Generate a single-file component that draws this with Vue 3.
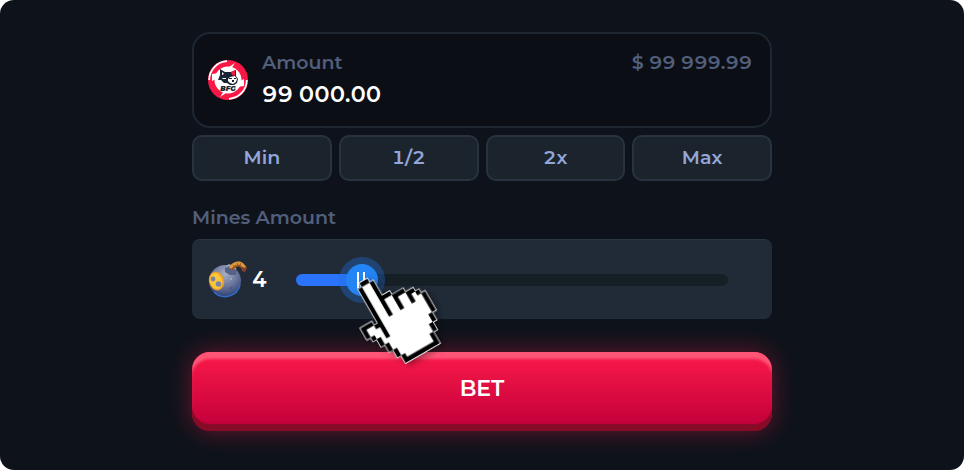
<template>
  <main class="page">
    <form class="bet-form" @submit.prevent>
      <div class="amount-card">
        <svg class="logo" viewBox="0 0 40 40" aria-hidden="true">
          <circle cx="20" cy="20" r="20" fill="#fb1745" />
          <path d="M1.2 20A18.8 18.8 0 0 1 19 1.2M38.8 20A18.8 18.8 0 0 1 21 38.8" fill="none" stroke="#fff" stroke-width="1.8" />
          <circle cx="20" cy="20" r="13.5" fill="#fff" />
          <path d="M27 3l-9 6 3 1-5 4 10-4-3-1zM12 37l9-6-3-1 5-4-10 4 3 1zM4 14l7-1-3 4 5-2-5 8 0-4-4 2zM36 26l-7 1 3-4-5 2 5-8 0 4 4-2z" fill="#fff" />
          <path d="M12 9l5 3 6 0 5-2 0 6 2 3-1 4-3 2-4 0-3-2-3 0-3-3-3 0 2-5z" fill="#192332" />
          <path d="M23 12l4-2 0 6-3-1z" fill="#fb1745" />
          <path d="M14 12l2 2-2 1zM14 18l4 0 0 1-3 0zM20 19l2-2 5-1 2 3-1 3-3 2-3-1-2-2z" fill="#fff" />
          <path d="M21 18l3 0 0 1-3 0zM26 18l2 0 0 1-2 0zM24 20l2 0 0 2-2 0z" fill="#192332" />
          <text x="20" y="31" text-anchor="middle">BFG</text>
        </svg>
        <div class="amount-main">
          <label for="amount">Amount</label>
          <input id="amount" v-model="amount" type="text" inputmode="decimal" />
        </div>
        <output class="balance">$ 99 999.99</output>
      </div>

      <div class="presets">
        <button v-for="preset in presets" :key="preset" type="button">{{ preset }}</button>
      </div>

      <label class="mines-label" for="mines">Mines Amount</label>
      <div class="mines-card">
        <svg class="bomb" viewBox="0 0 40 38" aria-hidden="true">
          <defs>
            <radialGradient id="shell" cx="50%" cy="28%" r="75%">
              <stop offset="0" stop-color="#a8aec4" />
              <stop offset="0.5" stop-color="#6c779e" />
              <stop offset="1" stop-color="#2b3c70" />
            </radialGradient>
          </defs>
          <circle cx="17" cy="20" r="16" fill="url(#shell)" />
          <path d="M6 31a15.5 15.5 0 0 0 26-7" fill="none" stroke="#2f6cc8" stroke-width="1.5" />
          <path d="M17 7l4-3 8 5-1 5-6 0-5-3z" fill="#566287" />
          <path d="M18 6l3-2 7 4" fill="none" stroke="#a5aec5" stroke-width="1.5" />
          <path d="M23 8c2-3 5-5 8-5s4 3 6 5" fill="none" stroke="#9a5520" stroke-width="5" />
          <path d="M22 7c2-3 6-5 9-5s4 3 6 5" fill="none" stroke="#dd9a3c" stroke-width="3" />
          <path d="M25 4l2 3M29 2l1 3M33 2l-1 3" stroke="#a86427" stroke-width="1" />
          <path d="M34 6l5 1-2 4-3-1z" fill="#87412d" />
          <ellipse cx="8.5" cy="20" rx="7.5" ry="9.5" transform="rotate(-14 8.5 20)" fill="#e9a02c" />
          <ellipse cx="8" cy="20" rx="6" ry="8" transform="rotate(-14 8 20)" fill="#ffc539" />
          <circle cx="5" cy="18" r="2.4" fill="#7984a5" />
          <circle cx="10.5" cy="23" r="2.8" fill="#7984a5" />
          <circle cx="23" cy="18" r="1" fill="#a8afc5" />
          <circle cx="23" cy="27" r="1" fill="#46537b" />
        </svg>
        <output class="mines-value" for="mines">{{ mines }}</output>
        <div class="slider">
          <input
            id="mines"
            v-model.number="mines"
            type="range"
            :min="MIN_MINES"
            :max="MAX_MINES"
            :style="{ '--fill': fill + '%' }"
          />
          <svg class="hand" viewBox="0 0 17 21" :style="{ left: handLeft }" aria-hidden="true">
            <path :d="handOutline" fill="#000" stroke="#e8ebf0" stroke-width="0.4" />
            <path :d="handOutline" fill="#000" />
            <path :d="handFill" fill="#fff" />
          </svg>
        </div>
      </div>

      <button class="bet" type="submit">BET</button>
    </form>
  </main>
</template>

<script setup>
import { computed, ref } from 'vue';

const MIN_MINES = 1;
const MAX_MINES = 25;

const amount = ref('99 000.00');
const mines = ref(4);
const presets = ['Min', '1/2', '2x', 'Max'];

const fill = computed(() => ((mines.value - MIN_MINES) / (MAX_MINES - MIN_MINES)) * 100);

// The thumb is 32px wide, so its centre travels over (100% - 32px)
const handLeft = computed(() => `calc((100% - 32px) * ${fill.value / 100} - 8px)`);

// Pixel hand: # is the outline, o is the inside
const hand = [
  '     ##          ',
  '    #oo#         ',
  '    #oo#         ',
  '    #oo#         ',
  '    #oo#         ',
  '    #oo###       ',
  '    #oo#oo###    ',
  '    #oo#oo#oo##  ',
  '    #oo#oo#oo#o# ',
  '### #oo#oo#oo#oo#',
  '#oo##ooooooooooo#',
  '#ooo#ooooooooooo#',
  ' #oo#ooooooooooo#',
  '  #o#ooooooooooo#',
  '  #oooooooooooo# ',
  '   #ooooooooooo# ',
  '   #oooooooooo#  ',
  '    #ooooooooo#  ',
  '    #oooooooo#   ',
  '     #ooooooo#   ',
  '     #########   ',
];

const cellsPath = (chars) =>
  hand
    .flatMap((row, y) => [...row].map((c, x) => (chars.includes(c) ? `M${x} ${y}h1v1h-1z` : '')))
    .join('');

const handOutline = cellsPath('#o');
const handFill = cellsPath('o');
</script>

<style>
body {
  margin: 0;
  background: #fff;
}
</style>

<style scoped>
.page {
  box-sizing: border-box;
  min-height: 100vh;
  padding: 32px 16px;
  border-radius: 14px;
  background: #0e131b;
  font-family: Montserrat, Inter, "Liberation Sans", sans-serif;
  font-size: 19px;
  font-weight: 600;
  font-variant-numeric: tabular-nums;
  line-height: 26px;
}

.bet-form {
  display: flex;
  flex-direction: column;
  max-width: 580px;
  margin: 0 auto;
}

button,
input {
  font: inherit;
  font-variant-numeric: inherit;
}

.amount-card {
  display: flex;
  align-items: flex-start;
  box-sizing: border-box;
  min-height: 96px;
  padding: 16px 18px 14px 14px;
  border: 2px solid #1e2731;
  border-radius: 18px;
  background: #0b0e15;
  color: #525f7c;
}

.logo {
  flex: none;
  width: 40px;
  height: 40px;
  margin: 10px 14px 0 0;
}

.logo text {
  fill: #192332;
  font-size: 7px;
  font-style: italic;
  font-weight: 900;
}

.amount-main {
  display: flex;
  flex: 1;
  flex-direction: column;
  min-width: 0;
}

.amount-main input {
  width: 100%;
  height: 32px;
  margin-top: 2px;
  padding: 0;
  border: 0;
  outline: 0;
  background: none;
  color: #fff;
  font-size: 22px;
}

.presets {
  display: grid;
  grid-template-columns: repeat(4, 1fr);
  gap: 7px;
  margin-top: 7px;
}

.presets button {
  height: 46px;
  padding: 0;
  border: 2px solid #28333f;
  border-radius: 10px;
  background: #1b232d;
  color: #94a6d8;
  cursor: pointer;
}

.mines-label {
  margin: 24px 0 8px;
  color: #525f7c;
}

.mines-card {
  display: flex;
  align-items: center;
  box-sizing: border-box;
  height: 80px;
  padding: 0 44px 0 16px;
  border-top: 1px solid #2a3542;
  border-radius: 8px;
  background: #212b38;
}

.bomb {
  flex: none;
  width: 40px;
  height: 38px;
}

.mines-value {
  width: 44px;
  margin-left: 4px;
  color: #fff;
  font-size: 22px;
}

.slider {
  position: relative;
  flex: 1;
  height: 46px;
}

.slider input {
  appearance: none;
  display: block;
  width: 100%;
  height: 46px;
  margin: 0;
  outline: 0;
  background: none;
  cursor: pointer;
}

.slider input::-webkit-slider-runnable-track {
  height: 12px;
  border-radius: 6px;
  background: linear-gradient(to right, #2a73fb calc(var(--fill) + 3px), #161e26 0);
}

.slider input::-webkit-slider-thumb {
  appearance: none;
  width: 32px;
  height: 32px;
  margin-top: -10px;
  border-radius: 50%;
  background:
    linear-gradient(#fff, #fff) 11px 8px / 2px 16px no-repeat,
    linear-gradient(#fff, #fff) 17px 8px / 2px 16px no-repeat,
    #2384f5;
  box-shadow: 0 0 0 7px rgba(35, 112, 220, 0.35);
}

.hand {
  position: absolute;
  top: 24px;
  width: 75px;
  height: 92px;
  overflow: visible;
  transform: rotate(-30deg);
  transform-origin: 26px 2px;
  filter: drop-shadow(2px 3px 3px rgba(0, 0, 0, 0.4));
  pointer-events: none;
  z-index: 1;
}

.bet {
  height: 79px;
  margin-top: 33px;
  padding: 0 0 6px;
  border: 0;
  border-radius: 18px;
  background: linear-gradient(#fb1a49, #c4003b 92%);
  box-shadow:
    inset 0 -7px 1px #850b27,
    inset 0 8px 3px -1px #ff5577,
    0 0 24px rgba(251, 23, 69, 0.4);
  color: #fff;
  font-size: 22px;
  cursor: pointer;
}
</style>
